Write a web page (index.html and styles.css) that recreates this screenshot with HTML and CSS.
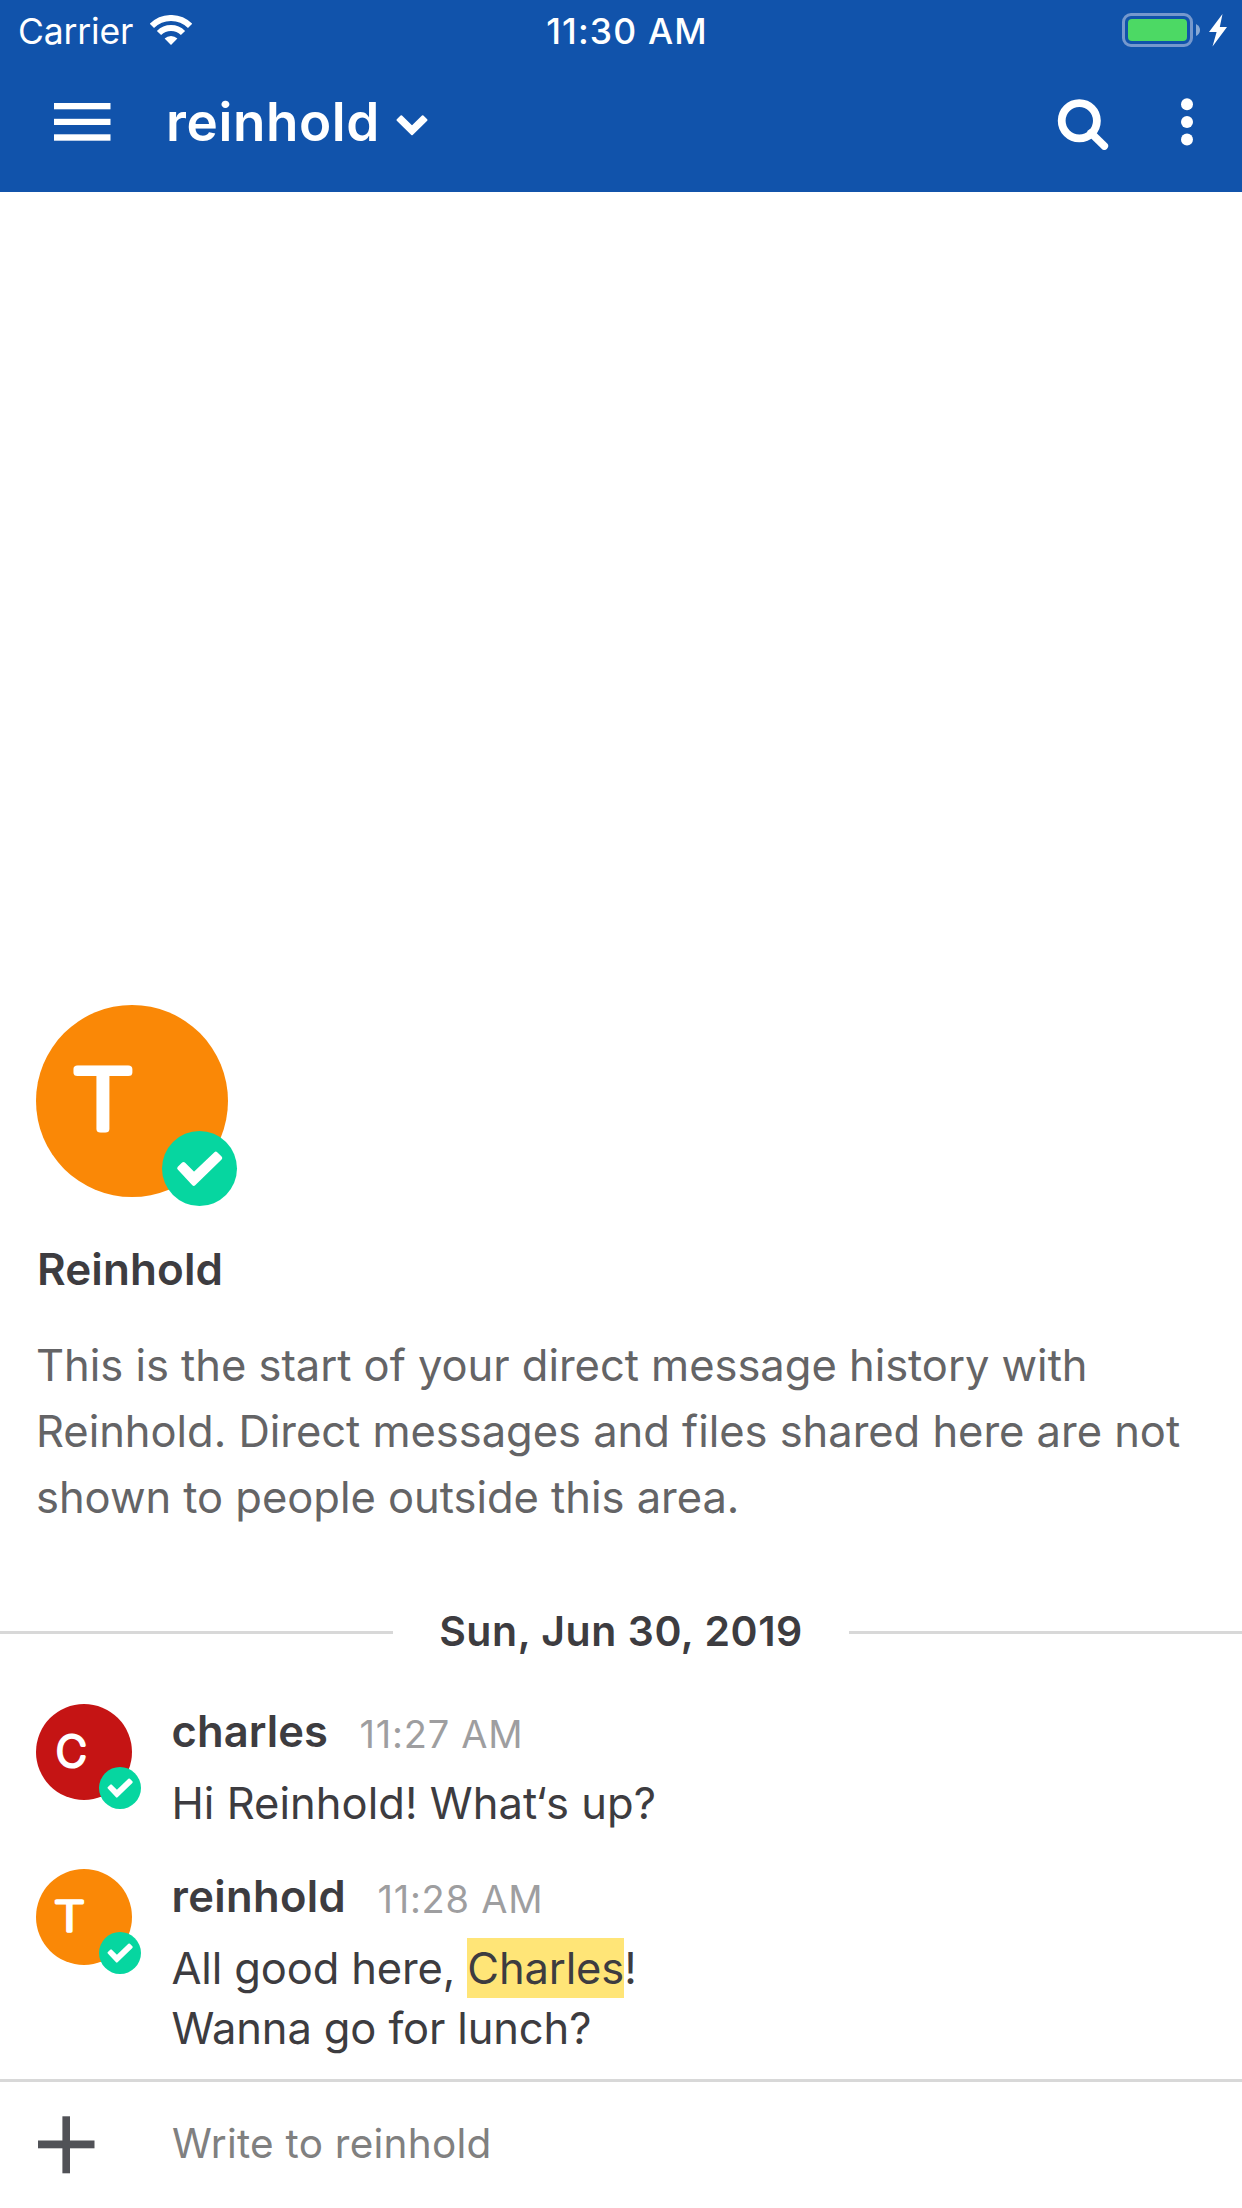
FILE: index.html
```
<!DOCTYPE html>
<html lang="en">
<head>
<meta charset="utf-8">
<title>reinhold</title>
<link rel="stylesheet" href="styles.css">
</head>
<body>
<svg class="defs" width="0" height="0">
  <symbol id="check" viewBox="0 0 75 75">
    <path d="M17.2 37.2L21.5 33L32 43.4L53.8 22.6L58.2 27L31.8 52.8Z" fill="#fff" stroke="#fff" stroke-width="4" stroke-linejoin="round"/>
  </symbol>
</svg>
<div class="app">
  <header class="header">
    <div class="status">
      <div class="status-left">
        <span class="carrier">Carrier</span>
        <svg class="wifi" width="42" height="31" viewBox="0 0 42 31" fill="none" stroke="#fff" stroke-width="6">
          <path d="M1.9 10.9A27 27 0 0 1 40.1 10.9"/>
          <path d="M9 18A17 17 0 0 1 33 18"/>
          <path d="M21 30L14.6 23.6A9 9 0 0 1 27.4 23.6Z" fill="#fff" stroke="none"/>
        </svg>
      </div>
      <span class="clock">11:30 AM</span>
      <div class="status-right">
        <svg width="106" height="36" viewBox="0 0 106 36">
          <rect x="1.5" y="2.5" width="68" height="31" rx="7.5" fill="none" stroke="#7598cd" stroke-width="3"/>
          <rect x="6" y="7" width="59" height="22" rx="4" fill="#4cd964"/>
          <path d="M74 12Q78 14 78 18T74 24Z" fill="#88a9d5"/>
          <path d="M100.5 2L97.8 15H105L90.5 34.5L94.6 20H87Z" fill="#fff"/>
        </svg>
      </div>
    </div>
    <nav class="nav">
      <svg class="menu" width="57" height="40" viewBox="0 0 57 40" fill="#fff">
        <rect y="1" width="56.5" height="6.3"/><rect y="16.8" width="56.5" height="6.2"/><rect y="32.3" width="56.5" height="6.4"/>
      </svg>
      <h1 class="title">reinhold</h1>
      <svg class="chevron" width="34" height="24" viewBox="0 0 34 24">
        <path d="M2.5 6L6.3 2.3L17 12.8L27.7 2.3L31.5 6L17 20.2Z" fill="#fff" stroke="#fff" stroke-width="2" stroke-linejoin="round"/>
      </svg>
      <svg class="search" width="52" height="52" viewBox="0 0 52 52" fill="none" stroke="#fff">
        <circle cx="22.3" cy="22.7" r="17.6" stroke-width="7.8"/>
        <path d="M34 35L47.3 48" stroke-width="7.6" stroke-linecap="round"/>
      </svg>
      <svg class="more" width="12" height="48" viewBox="0 0 12 48" fill="#fff">
        <circle cx="6" cy="6.3" r="6"/><circle cx="6" cy="24" r="6"/><circle cx="6" cy="41.5" r="6"/>
      </svg>
    </nav>
  </header>

  <main class="feed">
    <section class="intro">
      <div class="avatar avatar-large orange">
        <svg viewBox="0 0 192 192"><text class="letter" transform="translate(67 124) scale(1.19 1)">T</text></svg>
        <svg class="badge"><use href="#check"/></svg>
      </div>
      <h2 class="intro-name">Reinhold</h2>
      <p class="intro-text">This is the start of your direct message history with Reinhold. Direct messages and files shared here are not shown to people outside this area.</p>
    </section>

    <div class="day"><span class="day-label">Sun, Jun 30, 2019</span></div>

    <article class="message">
      <div class="avatar red">
        <svg viewBox="0 0 192 192"><text class="letter" transform="translate(70.5 124) scale(1.02 1)">C</text></svg>
        <svg class="badge"><use href="#check"/></svg>
      </div>
      <div class="body">
        <div class="meta"><span class="author">charles</span><time class="time">11:27 AM</time></div>
        <p class="text">Hi Reinhold! What‘s up?</p>
      </div>
    </article>

    <article class="message">
      <div class="avatar orange">
        <svg viewBox="0 0 192 192"><text class="letter" transform="translate(67 124) scale(1.19 1)">T</text></svg>
        <svg class="badge"><use href="#check"/></svg>
      </div>
      <div class="body">
        <div class="meta"><span class="author wide">reinhold</span><time class="time">11:28 AM</time></div>
        <p class="text tight">All good here, <mark class="mention">Charles</mark>!<br>Wanna go for lunch?</p>
      </div>
    </article>
  </main>

  <footer class="composer">
    <svg class="plus" width="57" height="58" viewBox="0 0 57 58" fill="#515257">
      <rect y="24.5" width="56.5" height="7.8"/><rect x="24.4" y="0.3" width="7.6" height="57"/>
    </svg>
    <span class="placeholder">Write to reinhold</span>
  </footer>
</div>
</body>
</html>
```
FILE: styles.css
```
* { box-sizing: border-box; margin: 0; padding: 0; }
body { background: #fff; color: #3d3c40; font-family: Inter, "Liberation Sans", sans-serif; }
svg { display: block; flex: none; }
.defs { position: absolute; }
.app { display: flex; flex-direction: column; width: 1242px; height: 2208px; }

.header { height: 192px; background: #1153ab; color: #fff; }
.status { display: grid; grid-template-columns: 1fr auto 1fr; height: 62px; line-height: 64px; font-size: 35.5px; padding: 0 14px 0 18px; }
.status-left { display: flex; }
.carrier { letter-spacing: -0.17px; width: 132px; }
.wifi { margin-top: 15px; }
.clock { font-weight: 500; letter-spacing: 1.14px; padding-left: 8px; }
.status-right { display: flex; justify-content: flex-end; padding-top: 12px; }

.nav { display: flex; align-items: flex-start; padding: 0 49px 0 54px; height: 130px; }
.menu { margin: 40px 55px 0 0; }
.title { font-size: 53px; line-height: 121px; font-weight: 600; letter-spacing: 0.6px; width: 229px; }
.chevron { margin-top: 52px; }
.search { margin: 36px 72px 0 auto; }
.more { margin-top: 36px; }

.feed { flex: 1; display: flex; flex-direction: column; justify-content: flex-end; padding-bottom: 21px; }
.intro { padding: 0 36px; }
.avatar { position: relative; flex: none; width: 96px; height: 96px; border-radius: 50%; }
.avatar-large { width: 192px; height: 192px; }
.orange { background: #fa8806; }
.red { background: #c51414; }
.letter { font-size: 83px; font-weight: 200; text-anchor: middle; fill: #fff; stroke: #fff; stroke-width: 7px; stroke-linejoin: round; }
.badge { position: absolute; left: 63px; top: 63px; width: 42px; height: 42px; border-radius: 50%; background: #06d6a0; }
.avatar-large .badge { left: 126px; top: 126px; width: 75px; height: 75px; }
.intro-name { margin-top: 42px; padding-left: 1px; font-size: 44px; line-height: 60px; font-weight: 600; letter-spacing: 0.1px; }
.intro-text { margin-top: 33px; font-size: 43.5px; line-height: 66px; letter-spacing: -0.03px; color: #646466; }

.day { display: flex; align-items: center; gap: 46px; height: 61px; margin: 72px 0 41px; }
.day::before, .day::after { content: ""; flex: 1; height: 3px; background: #d8d8d8; }
.day-label { font-size: 41px; font-weight: 600; line-height: 58px; letter-spacing: 0.55px; padding-bottom: 3px; }

.message { display: flex; gap: 39.5px; padding: 0 36px; }
.message + .message { margin-top: 36px; }
.body { padding-top: 1px; }
.meta { display: flex; height: 58px; gap: 31.5px; }
.author { font-size: 43.5px; line-height: 52px; font-weight: 600; letter-spacing: 0.1px; }
.author.wide { letter-spacing: 0.35px; }
.time { font-size: 38px; line-height: 58px; letter-spacing: 0.75px; color: #9e9ea0; }
.text { margin-top: 10px; font-size: 43.5px; line-height: 60px; letter-spacing: 0.04px; }
.text.tight { letter-spacing: -0.14px; }
.mention { display: inline-block; height: 60px; vertical-align: top; background: #ffe577; color: inherit; }

.composer { display: flex; height: 129px; border-top: 3px solid #d8d8d8; padding-left: 38px; }
.plus { margin: 34px 77px 0 0; }
.placeholder { font-size: 40.5px; line-height: 124px; letter-spacing: 0.25px; color: #808080; }
```
